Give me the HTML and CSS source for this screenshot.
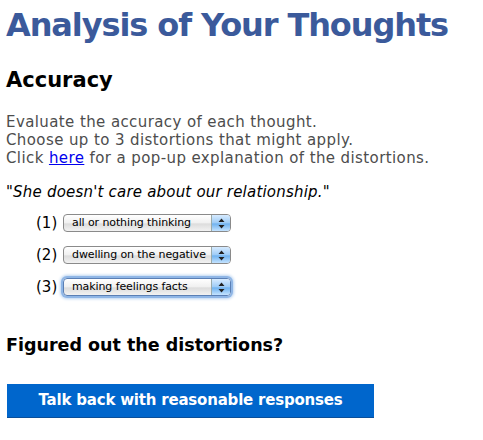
FILE: index.html
```html
<!DOCTYPE html>
<html>
<head>
<meta charset="utf-8">
<link rel="stylesheet" href="styles.css">
</head>
<body>
<h1 class="title">Analysis of Your Thoughts</h1>
<h2 class="section">Accuracy</h2>
<p class="intro">Evaluate the accuracy of each thought.<br>
Choose up to 3 distortions that might apply.<br>
Click <a href="#">here</a> for a pop-up explanation of the distortions.</p>
<p class="thought">"<em>She doesn't care about our relationship.</em>"</p>
<div class="choices">
  <div class="choice">
    <span class="num">(1)</span>
    <div class="select"><span class="sel-text">all or nothing thinking</span><span class="arrow"><svg width="7" height="11" viewBox="0 0 7 11"><path d="M3.5 0.5 L6.5 4 L0.5 4 Z M3.5 10.5 L6.5 7 L0.5 7 Z" fill="#222"/></svg></span></div>
  </div>
  <div class="choice">
    <span class="num">(2)</span>
    <div class="select"><span class="sel-text">dwelling on the negative</span><span class="arrow"><svg width="7" height="11" viewBox="0 0 7 11"><path d="M3.5 0.5 L6.5 4 L0.5 4 Z M3.5 10.5 L6.5 7 L0.5 7 Z" fill="#222"/></svg></span></div>
  </div>
  <div class="choice">
    <span class="num">(3)</span>
    <div class="select focused"><span class="sel-text">making feelings facts</span><span class="arrow"><svg width="7" height="11" viewBox="0 0 7 11"><path d="M3.5 0.5 L6.5 4 L0.5 4 Z M3.5 10.5 L6.5 7 L0.5 7 Z" fill="#222"/></svg></span></div>
  </div>
</div>
<h3 class="figured">Figured out the distortions?</h3>
<div class="btn">Talk back with reasonable responses</div>
</body>
</html>
```
FILE: styles.css
```css
body {
  margin: 0;
  padding: 0 6px;
  font-family: "DejaVu Sans", Verdana, sans-serif;
  background: #fff;
}
.title {
  margin: 7px 0 0;
  font-size: 32px;
  line-height: 36px;
  color: #3b5a9b;
  font-weight: bold;
  letter-spacing: -1.1px;
}
.section {
  margin: 24px 0 0;
  font-size: 21px;
  line-height: 26px;
  color: #000;
}
.intro {
  margin: 20px 0 0;
  font-size: 15px;
  line-height: 18px;
  letter-spacing: 0.4px;
  color: #4d4d4d;
}
.intro a { color: #0000ee; }
.thought {
  margin: 16px 0 0;
  font-size: 15px;
  line-height: 18px;
  letter-spacing: 0.2px;
  color: #000;
}
.choices {
  margin: 13px 0 0 30px;
  display: flex;
  flex-direction: column;
  gap: 14px;
}
.choice {
  display: flex;
  align-items: center;
  gap: 7px;
}
.num {
  flex: none;
  font-size: 15px;
  line-height: 18px;
  color: #000;
  width: 20px;
}
.select {
  flex: none;
  width: 168px;
  height: 18px;
  border: 1px solid #8a8a8a;
  border-radius: 4px;
  display: flex;
  align-items: stretch;
  background: linear-gradient(#ffffff, #f0f0f0 50%, #dcdcdc 55%, #f2f2f2);
  overflow: hidden;
  box-sizing: border-box;
}
.sel-text {
  flex: 1;
  min-width: 0;
  font-size: 11px;
  line-height: 16px;
  letter-spacing: -0.1px;
  padding-left: 8px;
  color: #000;
  white-space: nowrap;
  overflow: hidden;
}
.arrow {
  flex: none;
  width: 18px;
  display: flex;
  align-items: center;
  justify-content: center;
  border-left: 1px solid #9aa;
  background: linear-gradient(#d7ebff, #9ccbf6 50%, #6fb2ef 55%, #c4e3ff);
}
.select.focused {
  box-shadow: 0 0 0 2px #8fb6e6, 0 0 3px 3px #b9d3f1;
  border-color: #5a7fb5;
}
.figured {
  margin: 39px 0 0;
  font-size: 17.5px;
  line-height: 20px;
  color: #000;
}
.btn {
  margin: 29px 0 0 1px;
  width: 367px;
  height: 34px;
  background: #0066cc;
  border-bottom: 1px solid #0a4f9a;
  box-sizing: border-box;
  color: #fff;
  font-weight: bold;
  font-size: 15px;
  letter-spacing: -0.2px;
  line-height: 33px;
  text-align: center;
}
```
